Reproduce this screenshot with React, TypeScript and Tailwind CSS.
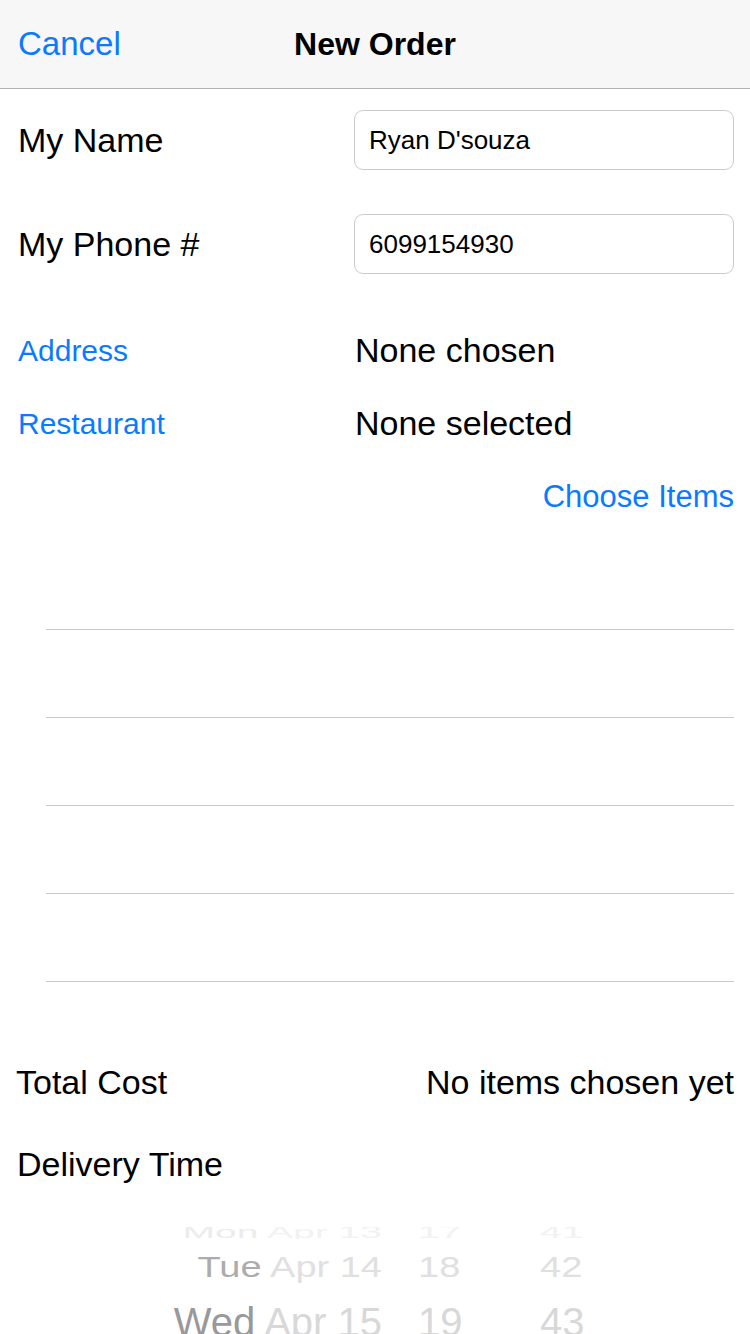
import React from 'react';

const font = { fontFamily: '"Liberation Sans", Arial, sans-serif' };

function PickerRow({ day, date, hour, minute, className, dayClass, restClass }: { day: string; date: string; hour: string; minute: string; className: string; dayClass: string; restClass: string }) {
  return (
    <div className={`flex items-center whitespace-nowrap ${className}`}>
      <div className="w-[382px] text-right">
        <span className={dayClass}>{day}</span> <span className={restClass}>{date}</span>
      </div>
      <div className="w-[36px]" />
      <div className={`w-[122px] ${restClass}`}>{hour}</div>
      <div className={restClass}>{minute}</div>
    </div>
  );
}

export default function App() {
  return (
    <div className="w-[750px] h-[1334px] bg-white overflow-hidden flex flex-col text-black" style={font}>
      <div className="h-[89px] shrink-0 bg-[#f7f7f7] border-b border-[#b2b2b2] flex items-center relative">
        <span className="pl-[18px] text-[33px] text-[#0a7aff]">Cancel</span>
        <span className="absolute left-0 right-0 text-center text-[32px] font-bold pointer-events-none">New Order</span>
      </div>

      <div className="flex items-center h-[60px] mt-[21px] pr-[16px]">
        <span className="w-[354px] pl-[18px] text-[34px]">My Name</span>
        <div className="flex-1 h-[60px] rounded-[9px] border border-[#cccccc] flex items-center pl-[14px] text-[26px]">Ryan D'souza</div>
      </div>
      <div className="flex items-center h-[60px] mt-[44px] pr-[16px]">
        <span className="w-[354px] pl-[18px] text-[34px]">My Phone #</span>
        <div className="flex-1 h-[60px] rounded-[9px] border border-[#cccccc] flex items-center pl-[14px] text-[26px]">6099154930</div>
      </div>

      <div className="flex items-center h-[40px] mt-[56px]">
        <span className="w-[355px] pl-[18px] text-[30px] text-[#0a7aff]">Address</span>
        <span className="text-[34px]">None chosen</span>
      </div>
      <div className="flex items-center h-[40px] mt-[33px]">
        <span className="w-[355px] pl-[18px] text-[30px] text-[#0a7aff]">Restaurant</span>
        <span className="text-[34px]">None selected</span>
      </div>
      <div className="flex justify-end items-center h-[40px] mt-[34px] pr-[16px]">
        <span className="text-[31px] text-[#0a7aff]">Choose Items</span>
      </div>

      <div className="flex flex-col mt-[112px] pl-[46px] pr-[16px]">
        <div className="h-[88px] border-t border-[#c8c7cc]" />
        <div className="h-[88px] border-t border-[#c8c7cc]" />
        <div className="h-[88px] border-t border-[#c8c7cc]" />
        <div className="h-[88px] border-t border-[#c8c7cc]" />
        <div className="h-[1px] bg-[#c8c7cc]" />
      </div>

      <div className="flex items-center justify-between h-[40px] mt-[80px] pl-[16px] pr-[16px]">
        <span className="text-[34px]">Total Cost</span>
        <span className="text-[34px]">No items chosen yet</span>
      </div>
      <div className="flex items-center h-[40px] mt-[42px] pl-[17px]">
        <span className="text-[34px]">Delivery Time</span>
      </div>

      <div className="flex flex-col mt-[43px] h-[120px]">
        <div className="h-[12px] overflow-hidden">
          <PickerRow day="Mon" date="Apr 13" hour="17" minute="41" className="text-[39px] leading-[34px] scale-y-[0.4] origin-top -mt-[1px]" dayClass="text-[#ececec]" restClass="text-[#f2f2f2]" />
        </div>
        <PickerRow day="Tue" date="Apr 14" hour="18" minute="42" className="text-[38px] leading-[40px] scale-y-[0.78] mt-[8px]" dayClass="text-[#acacac]" restClass="text-[#e0e0e0]" />
        <PickerRow day="Wed" date="Apr 15" hour="19" minute="43" className="text-[40px] leading-[44px] mt-[13px]" dayClass="text-[#999999]" restClass="text-[#d8d8d8]" />
      </div>
    </div>
  );
}
